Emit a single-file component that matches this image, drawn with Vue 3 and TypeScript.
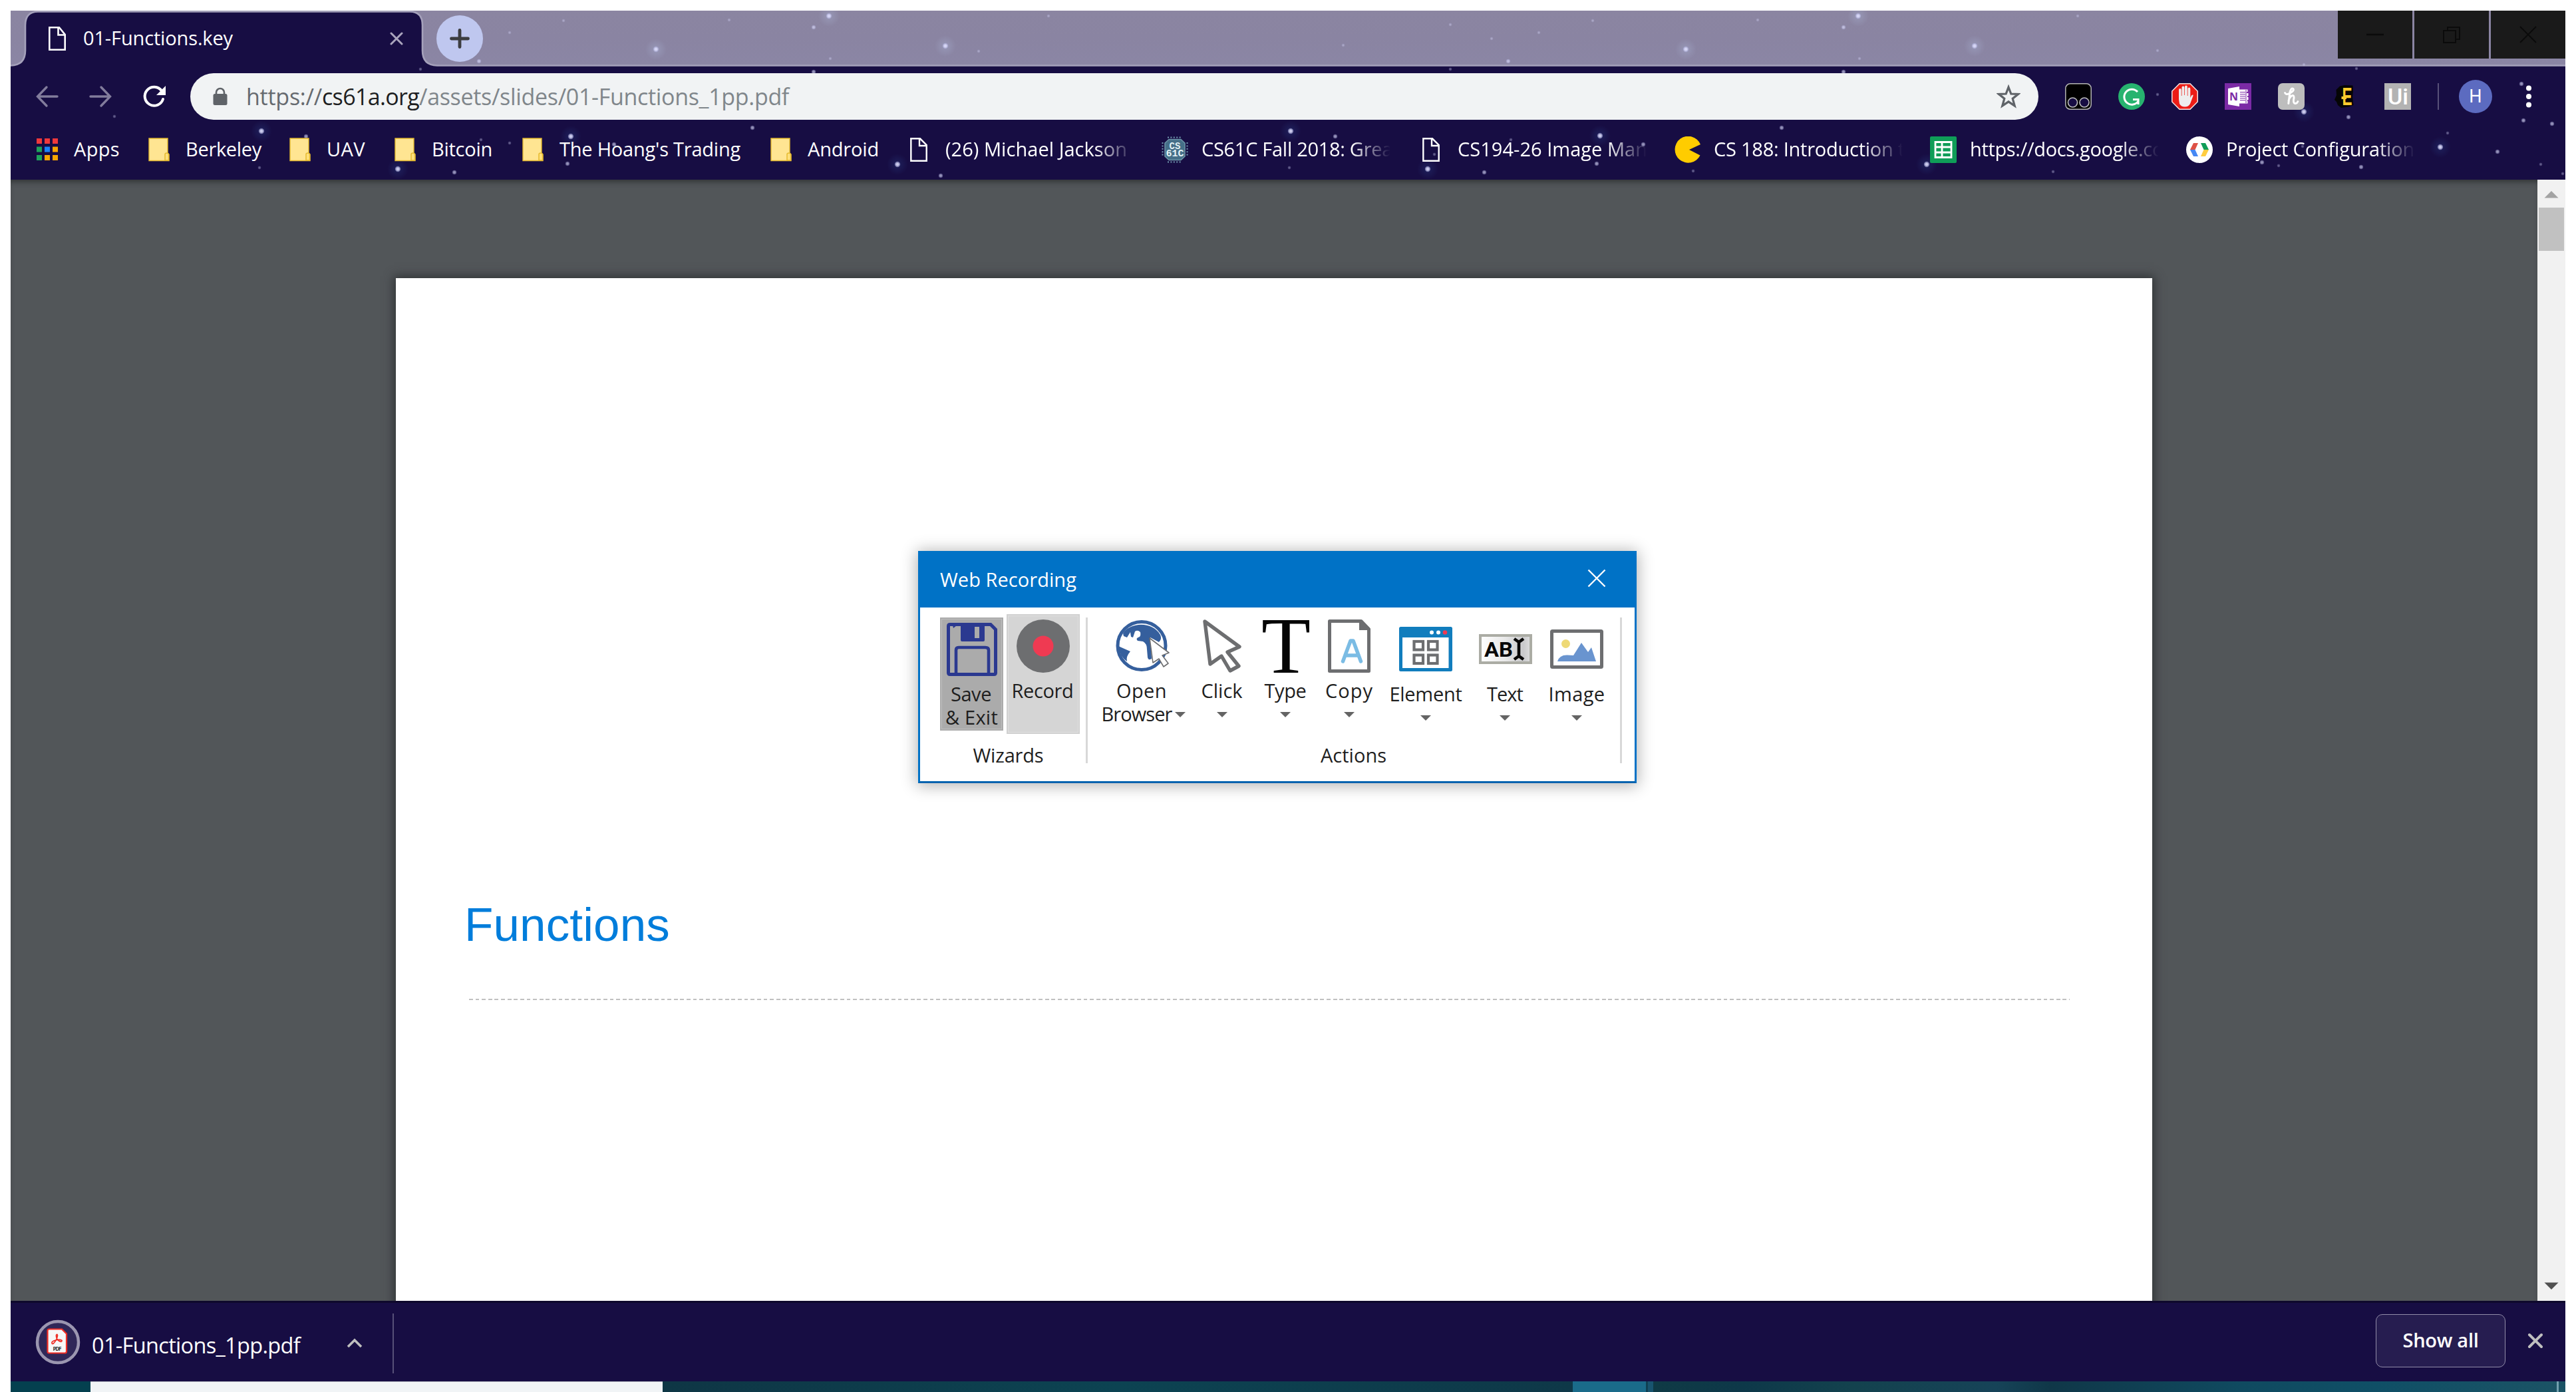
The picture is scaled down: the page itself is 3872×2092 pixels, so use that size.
<script setup lang="ts">
import type { Directive } from 'vue'

/* Spreads a label's letters so that it takes the given width in pixels. */
const vFit: Directive<HTMLElement, number> = {
  mounted(el, binding) {
    const natural = el.getBoundingClientRect().width
    const count = (el.textContent ?? '').length
    if (count) el.style.letterSpacing = `${(binding.value - natural) / count}px`
  },
}

interface Bookmark { icon: string; label: string; width: number; slot: number; fade?: boolean }
const bookmarks: Bookmark[] = [
  { icon: 'apps', label: 'Apps', width: 69, slot: 168 },
  { icon: 'folder', label: 'Berkeley', width: 114, slot: 212 },
  { icon: 'folder', label: 'UAV', width: 58, slot: 158 },
  { icon: 'folder', label: 'Bitcoin', width: 91, slot: 192 },
  { icon: 'folder', label: "The Hoang's Trading", width: 272, slot: 373 },
  { icon: 'folder', label: 'Android', width: 107, slot: 207 },
  { icon: 'file', label: '(26) Michael Jackson', width: 273, slot: 385, fade: true },
  { icon: 'chip', label: 'CS61C Fall 2018: Grea', width: 287, slot: 385, fade: true },
  { icon: 'file', label: 'CS194-26 Image Man', width: 285, slot: 385, fade: true },
  { icon: 'pac', label: 'CS 188: Introduction t', width: 287, slot: 385, fade: true },
  { icon: 'sheet', label: 'https://docs.google.co', width: 291, slot: 385, fade: true },
  { icon: 'dev', label: 'Project Configuration', width: 283, slot: 385, fade: true },
]

interface Action { id: string; lines: [string, number][]; slot: number; low?: boolean }
const actions: Action[] = [
  { id: 'globe', lines: [['Open', 76], ['Browser', 106]], slot: 140 },
  { id: 'cursor', lines: [['Click', 62]], slot: 101 },
  { id: 'type', lines: [['Type', 63]], slot: 90 },
  { id: 'copy', lines: [['Copy', 72]], slot: 102 },
  { id: 'element', lines: [['Element', 109]], slot: 128, low: true },
  { id: 'text', lines: [['Text', 54]], slot: 110, low: true },
  { id: 'image', lines: [['Image', 85]], slot: 106, low: true },
]

/* x, y, size: 1 faint, 2 medium, 3 bright with a glow */
const stars: [number, number, number][] = [
  [847, 31, 1], [766, 49, 1], [986, 74, 3], [720, 92, 2], [1096, 30, 1], [1246, 24, 3], [1223, 41, 2],
  [1421, 69, 3], [1576, 24, 1], [1471, 77, 1], [1248, 88, 1], [1223, 108, 2], [2180, 37, 1], [2394, 31, 1],
  [2313, 49, 1], [2534, 74, 3], [2267, 92, 2], [2642, 30, 1], [2793, 24, 3], [2771, 41, 2], [2968, 69, 3],
  [2795, 88, 1], [2242, 58, 1], [2019, 68, 1], [2771, 108, 2], [3123, 24, 1], [3243, 76, 1], [3463, 97, 1],
  [172, 175, 1], [632, 104, 1], [2180, 104, 1], [3542, 103, 1], [3243, 142, 1],
  [393, 197, 3], [460, 205, 2], [723, 210, 1], [858, 205, 3], [766, 215, 1], [923, 217, 2], [853, 246, 2],
  [598, 254, 3], [683, 259, 2], [390, 252, 1], [1131, 192, 2], [1349, 247, 3], [1414, 264, 2], [1940, 197, 3],
  [1938, 252, 1], [2007, 205, 2], [2271, 210, 1], [2405, 204, 3], [2470, 217, 2], [2400, 246, 2],
  [2146, 254, 3], [2231, 259, 2], [2156, 232, 1], [2678, 192, 2], [2896, 247, 3], [2545, 257, 1],
  [3790, 126, 2], [3463, 168, 3], [3530, 176, 2], [3793, 181, 2], [3836, 186, 2], [3679, 200, 1],
  [3668, 221, 3], [3754, 228, 2], [3400, 244, 2], [3425, 249, 1], [3549, 251, 2], [3086, 258, 1],
  [3819, 247, 1], [3461, 220, 1], [3852, 261, 1],
]
const starRadius = [0, 2.4, 3.2, 4.2]
const starOpacity = [0, 0.38, 0.65, 0.9]
</script>

<template>
  <div class="screen">
    <div class="window">
      <div class="chrome">
        <div class="strip">
          <svg class="tabshape" width="3840" height="84" viewBox="0 0 3840 84">
            <path d="M0 84V83Q22 82 22 60V22Q22 2 41 2H600Q619 2 619 22V60Q619 82 641 83H3840V84Z" fill="#170d43" />
            <path d="M0 82.5Q22 82 22 60V22Q22 1.5 41 1.5H600Q619 1.5 619 22V60Q619 82 641 82.5H3840" fill="none" stroke="#a5a1bb" stroke-width="2.6" />
          </svg>
          <div class="tab">
            <svg width="26" height="36" viewBox="0 0 26 36" fill="none" stroke="#fff" stroke-width="2.6"><path d="M1.3 1.3H16L24.7 12V34.7H1.3ZM14.500 1.300V12.500H24.700" /></svg>
            <span class="tabtitle"><span v-fit="225">01-Functions.key</span></span>
            <svg class="tabclose" width="20" height="20" viewBox="0 0 20 20" stroke="#aaa5bd" stroke-width="3" stroke-linecap="round"><path d="M2 2 18 18M18 2 2 18" /></svg>
          </div>
          <div class="newtab"><svg width="30" height="30" viewBox="0 0 30 30" stroke="#3c3d40" stroke-width="4.800" stroke-linecap="round"><path d="M15 2.500V27.500M2.500 15H27.500" /></svg></div>
          <div class="winbtns">
            <div><svg width="28" height="28" viewBox="0 0 28 28" stroke="#0b0b0b" stroke-width="2.5"><path d="M1 14H27" /></svg></div>
            <div><svg width="28" height="28" viewBox="0 0 28 28" fill="none" stroke="#0b0b0b" stroke-width="2"><path d="M2 8H20V26H2ZM8 8V3H26V21H20" /></svg></div>
            <div><svg width="28" height="28" viewBox="0 0 28 28" stroke="#0b0b0b" stroke-width="2"><path d="M2 2 26 26M26 2 2 26" /></svg></div>
          </div>
        </div>

        <svg class="stars" width="3840" height="254" viewBox="16 16 3840 254">
          <defs>
            <radialGradient id="glow"><stop offset="0" stop-color="#3a6fc0" stop-opacity=".2" /><stop offset="1" stop-color="#3a6fc0" stop-opacity="0" /></radialGradient>
            <radialGradient id="paleglow"><stop offset="0" stop-color="#b4c4e6" stop-opacity=".3" /><stop offset="1" stop-color="#b4c4e6" stop-opacity="0" /></radialGradient>
            <radialGradient id="spark"><stop offset="0.4" stop-color="#dcdcfb" /><stop offset="1" stop-color="#b4b4e4" stop-opacity=".5" /></radialGradient>
          </defs>
          <g v-for="(s, i) in stars" :key="i">
            <circle v-if="s[2] === 3" :cx="s[0]" :cy="s[1]" r="16" :fill="s[1] < 100 ? 'url(#paleglow)' : 'url(#glow)'" />
            <circle :cx="s[0]" :cy="s[1]" :r="starRadius[s[2]]" fill="url(#spark)" :opacity="starOpacity[s[2]]" />
          </g>
        </svg>

        <div class="toolbar">
          <svg class="nav" width="34" height="34" viewBox="0 0 34 34" fill="none" stroke="#827c9c" stroke-width="3.4" stroke-linecap="round"><path d="M32 17H3M16 3 2.500 17 16 31" /></svg>
          <svg class="nav fwd" width="34" height="34" viewBox="0 0 34 34" fill="none" stroke="#827c9c" stroke-width="3.4" stroke-linecap="round"><path d="M2 17H31M18 3 31.500 17 18 31" /></svg>
          <svg class="nav reload" width="36" height="36" viewBox="0 0 36 36"><path d="M29 9.500A14 14 0 1 0 31 22" fill="none" stroke="#fff" stroke-width="4" stroke-linecap="round" /><path d="M35 2V16H21Z" fill="#fff" /></svg>
          <div class="omnibox">
            <svg width="22" height="28" viewBox="0 0 22 28"><path d="M5 12V8A6 6 0 0 1 17 8V12" fill="none" stroke="#5f6368" stroke-width="2.600" /><rect x=".5" y="10" width="21" height="17" rx="2.500" fill="#5f6368" /></svg>
            <span class="url"><span v-fit="114" class="scheme">https://</span><span v-fit="146" class="host">cs61a.org</span><span v-fit="556" class="path">/assets/slides/01-Functions_1pp.pdf</span></span>
            <svg class="star" width="36" height="36" viewBox="0 0 36 36"><path d="M18 4 21.800 14 32.500 14.500 24.200 21.200 27.200 32 18 25.800 8.800 32 11.800 21.200 3.500 14.500 14.200 14Z" fill="none" stroke="#5f6368" stroke-width="3.200" /></svg>
          </div>
          <div class="extensions">
            <svg width="40" height="40" viewBox="0 0 40 40"><rect x=".8" y=".8" width="38.400" height="38.400" rx="7" fill="#000" stroke="#b5b5b5" stroke-width="1.500" /><g fill="#170d43" stroke="#bdbdbd" stroke-width="1.600"><circle cx="11.500" cy="29" r="7" /><circle cx="29" cy="29" r="7" /></g></svg>
            <svg width="40" height="40" viewBox="0 0 40 40"><circle cx="20" cy="20" r="20" fill="#27b36f" /><path d="M29 13A11.500 11.500 0 1 0 30 27M22 24.500H30V32" fill="none" stroke="#fff" stroke-width="3" /></svg>
            <svg width="40" height="40" viewBox="0 0 40 40"><path d="M12 .8H28L39.200 12V28L28 39.200H12L.8 28V12Z" fill="#ec1c16" stroke="#f3e5e5" stroke-width="1.500" /><path d="M11 24V10a1.900 1.900 0 0 1 3.800 0V19H15.500V6.500a1.900 1.900 0 0 1 3.800 0V18H20V5.500a1.900 1.900 0 0 1 3.800 0V19H24.500V8.500a1.900 1.900 0 0 1 3.800 0V22L30 18.500q3-2 2.500.5L28 31q-2.500 4.500-8 4.500T12 31Z" fill="#eee" /></svg>
            <svg width="40" height="40" viewBox="0 0 40 40"><rect width="40" height="40" fill="#7b2aa5" /><path d="M22 9.500H34.500V13H33V15H35.500V19H34V21H35.500V25H34V27H34.500V30.500H22Z" fill="#fff" /><path d="M23 13.500H31M23 16.500H31M23 19.500H31M23 22.500H31M23 25.500H31M32 10V30" stroke="#7b2aa5" stroke-width="1" /><path d="M5 8 22 5V35L5 32Z" fill="#fff" /><text x="13.500" y="26" text-anchor="middle" font-family="Open Sans, sans-serif" font-size="16" font-weight="700" fill="#7b2aa5">N</text></svg>
            <svg width="40" height="40" viewBox="0 0 40 40"><rect width="40" height="40" rx="7" fill="#bdbdbd" /><path d="M10.500 14.500Q12 18 17 15.500Q25 11.500 23 8.500Q20 6.500 18 13L15.800 30.500M16 26Q19 18 22.500 18.500Q25 19 23.500 25Q23 31 26.500 30.500Q29 30 30 27.500" fill="none" stroke="#fff" stroke-width="2.900" stroke-linecap="round" stroke-linejoin="round" /></svg>
            <svg width="40" height="40" viewBox="0 0 40 40"><path d="M13 4.500 20 3 32.500 3.500 33 12 32 21 33.500 33 26 35.500 15 37 10 33 8 28 5 25 8 18 7.500 10Z" fill="#050505" /><text x="24" y="32.500" text-anchor="middle" font-family="Liberation Sans, sans-serif" font-size="36" font-weight="700" fill="#fccb2d" textLength="15" lengthAdjust="spacingAndGlyphs">E</text><path d="M15.500 22H23" stroke="#fccb2d" stroke-width="4" /></svg>
            <svg width="40" height="40" viewBox="0 0 40 40"><rect width="40" height="40" fill="#b3b3b3" /><text x="20.500" y="32" text-anchor="middle" font-family="Roboto, sans-serif" font-size="33" font-weight="500" fill="#fff" textLength="31" lengthAdjust="spacingAndGlyphs">Ui</text></svg>
          </div>
          <div class="rule"></div>
          <div class="avatar">H</div>
          <svg class="menu" width="10" height="36" viewBox="0 0 10 36" fill="#fff"><circle cx="5" cy="5.500" r="4" /><circle cx="5" cy="18" r="4" /><circle cx="5" cy="30.500" r="4" /></svg>
        </div>

        <div class="bookmarks">
          <div v-for="b in bookmarks" :key="b.label" class="bm" :style="{ width: b.slot + 'px' }">
            <svg width="40" height="40" viewBox="0 0 40 40">
              <g v-if="b.icon === 'apps'">
                <path d="M4 3h8v8H4zM16 3h8v8h-8zM28 3h8v8h-8z" fill="#f0383b" />
                <path d="M4 15.500h8v8H4zM4 28h8v8H4z" fill="#1fa35b" />
                <path d="M16 15.500h8v8h-8z" fill="#1a82fb" />
                <path d="M28 15.500h8v8h-8zM16 28h8v8h-8zM28 28h8v8h-8z" fill="#f7a500" />
              </g>
              <g v-else-if="b.icon === 'folder'"><path d="M5 3H33V25L35 27V36.500H5Z" fill="#ffe592" stroke="#e6bb31" stroke-width="1.400" /><path d="M29 36V27q0-2 2.500-2T34.500 27V36Z" fill="#ffe07d" stroke="#e6bb31" stroke-width="1.500" /></g>
              <path v-else-if="b.icon === 'file'" d="M8.300 3.300H22L31.700 13V36.700H8.300ZM21 3.300V14H31.700" fill="none" stroke="#fff" stroke-width="2.400" />
              <g v-else-if="b.icon === 'chip'">
                <path d="M9 1.500H31M9 38.500H31" stroke="#7399b0" stroke-width="2" stroke-dasharray="2 2.400" />
                <path d="M1.500 9V31M38.500 9V31" stroke="#7399b0" stroke-width="2" stroke-dasharray="2 2.400" />
                <path d="M11 4.500H29L35 10V30L29 35.500H11L5 30V10Z" fill="#456f88" stroke="#6d95a8" stroke-width="1.500" />
                <g font-family="Liberation Mono, monospace" font-weight="700" fill="#e2f1f5" text-anchor="middle"><text x="20" y="18.500" font-size="14">CS</text><text x="20" y="30" font-size="15">61C</text></g>
              </g>
              <path v-else-if="b.icon === 'pac'" d="M40 12A20 20 0 1 0 39.500 28.500L23 20Z" fill="#ffcc00" />
              <g v-else-if="b.icon === 'sheet'"><rect width="40" height="40" rx="2" fill="#0f9d58" /><path d="M8 8.500H32V31.500H8ZM8 16H32M8 24H32M18 8.500V31.500" fill="none" stroke="#fff" stroke-width="2.800" /></g>
              <g v-else><circle cx="20" cy="20" r="20" fill="#fff" /><path d="M11 10H18L13.500 20H6Z" fill="#de5145" /><path d="M6 20H13.500L18 30H11Z" fill="#4688f4" /><path d="M22 10H29L34 20H26.500Z" fill="#109d58" /><path d="M26.500 20H34L29 30H22Z" fill="#ffcd40" /></g>
            </svg>
            <span class="bmtext" :class="{ fade: b.fade }"><span v-fit="b.width">{{ b.label }}</span></span>
          </div>
        </div>
      </div>

      <div class="content">
        <div class="viewer">
          <div class="page">
            <h1><span v-fit="309">Functions</span></h1>
            <div class="dashes"></div>
          </div>
        </div>
        <div class="scrollbar">
          <svg width="42" height="42" viewBox="0 0 42 42"><path d="M21 17 31.500 27.500H10.500Z" fill="#a3a3a3" /></svg>
          <div class="thumb"></div>
          <svg class="down" width="42" height="42" viewBox="0 0 42 42"><path d="M21 25 31.500 14.500H10.500Z" fill="#505050" /></svg>
        </div>
      </div>

      <div class="downloads">
        <svg class="dlicon" width="68" height="68" viewBox="0 0 68 68">
          <circle cx="34" cy="34" r="31" fill="#2f2758" stroke="#9b96b0" stroke-width="4.500" />
          <path d="M21 14.500H40L47 21.500V48Q47 50.500 44.500 50.500H20.500Q18.500 50.500 18.500 48V17Q18.500 14.500 21 14.500Z" fill="#f7f7f7" stroke="#ef2d24" stroke-width="2.200" />
          <path d="M25 35.500Q24 33 31 31Q37 29.500 40 31.500Q40.500 34.500 36 32.500Q31 29 31.500 23.500Q33 21 33.500 24Q33 30 27.500 36Q25.500 37.500 25 35.500Z" fill="none" stroke="#ef2d24" stroke-width="1.700" />
          <text x="33" y="47" text-anchor="middle" font-family="Open Sans, sans-serif" font-size="8" font-weight="700" fill="#333" textLength="13">PDF</text>
        </svg>
        <span class="dltext"><span v-fit="313">01-Functions_1pp.pdf</span></span>
        <svg class="chev" width="24" height="16" viewBox="0 0 24 16"><path d="M2 14 12 4 22 14" fill="none" stroke="#bfbfbf" stroke-width="3.600" /></svg>
        <div class="dlrule"></div>
        <button class="showall"><span v-fit="114">Show all</span></button>
        <svg class="dlclose" width="24" height="24" viewBox="0 0 24 24" stroke="#bfbfbf" stroke-width="4" stroke-linecap="round"><path d="M3 3 21 21M21 3 3 21" /></svg>
      </div>

      <div class="taskbar">
        <div class="search"></div>
        <div class="mid"></div>
        <div class="active"></div>
        <div class="active2"></div>
        <div class="rest"></div>
        <div class="peek"></div>
        <div class="corner"></div>
      </div>
    </div>

    <div class="dialog">
      <div class="title">
        <span v-fit="205" class="caption">Web Recording</span>
        <svg width="28" height="28" viewBox="0 0 28 28" stroke="#fff" stroke-width="2.400"><path d="M1.500 1.500 26.500 26.500M26.500 1.500 1.500 26.500" /></svg>
      </div>
      <div class="groups">
        <div class="wizards">
          <div class="wizrow">
            <div class="wiz save">
              <svg width="76" height="80" viewBox="0 0 76 80">
                <path d="M2.500 5Q2.500 2.500 5 2.500H66L73.500 10V75Q73.500 77.500 71 77.500H5Q2.500 77.500 2.500 75Z" fill="none" stroke="#2b3990" stroke-width="5" />
                <path d="M21 3H57V26Q57 28 55 28H23Q21 28 21 26Z" fill="#2b3990" /><rect x="42" y="6" width="7" height="17" fill="#ababab" /><path d="M9 4H15L10 8Z" fill="#2b3990" />
                <path d="M14 77V41Q14 37 18 37H58Q63 37 63 41V77" fill="none" stroke="#2b3990" stroke-width="4.600" />
              </svg>
              <span class="lbl nudge"><span v-fit="61">Save</span></span>
              <span class="lbl"><span v-fit="79">&amp; Exit</span></span>
            </div>
            <div class="wiz record">
              <svg width="80" height="80" viewBox="0 0 80 80"><circle cx="40" cy="40" r="40" fill="#6d6e70" /><circle cx="40" cy="40" r="15.500" fill="#ef3a52" /></svg>
              <span class="lbl nudge"><span v-fit="93">Record</span></span>
            </div>
          </div>
          <div class="gname"><span v-fit="106">Wizards</span></div>
        </div>
        <div class="sep"></div>
        <div class="actions">
          <div class="actrow">
            <div v-for="a in actions" :key="a.id" class="act" :class="{ low: a.low }" :style="{ width: a.slot + 'px' }">
              <svg width="84" height="80" viewBox="-2 0 84 80">
                <g v-if="a.id === 'globe'">
                  <circle cx="40" cy="39.500" r="36" fill="#fff" stroke="#355f9d" stroke-width="5" />
                  <path d="M12 21C22 4 56 2 68 23C70 28 69 31 66 34L53 27 55 59Q50 62 49 57L48 45Q48 36 42 33L34 32Q30 28 37 26Q39 24 38 19Q34 15 30 18L27 27 24 26 23 19 18 27 13 25Z" fill="#355f9d" />
                  <path d="M5 40 23 48Q16 56 18 63Q7 56 5 40Z" fill="#355f9d" />
                  <path d="M52 28 81 50 71 54 80 66 73 71 66 59 57 65Z" fill="#fff" stroke="#6d6e70" stroke-width="1.600" stroke-linejoin="round" />
                </g>
                <path v-else-if="a.id === 'cursor'" d="M14 3 66 41 48 49 65 70 52 77 39 55 22 67Z" fill="#fff" stroke="#6d6e70" stroke-width="5.400" stroke-linejoin="round" />
                <text v-else-if="a.id === 'type'" x="41" y="80" text-anchor="middle" font-family="Liberation Serif, serif" font-size="121" fill="#050505" textLength="74" lengthAdjust="spacingAndGlyphs">T</text>
                <g v-else-if="a.id === 'copy'">
                  <path d="M10.500 2.500H58L69.500 14.500V77.500H10.500Z" fill="#fff" stroke="#6d6e70" stroke-width="5" stroke-linejoin="round" /><path d="M55 1H59L71 13V16H55Z" fill="#6d6e70" />
                  <path d="M30.500 63 42 32H46L57.500 63M34 54H54" fill="none" stroke="#7bbce4" stroke-width="5.500" stroke-linecap="round" stroke-linejoin="round" />
                </g>
                <g v-else-if="a.id === 'element'">
                  <rect x="0" y="6" width="80" height="67" rx="2.500" fill="#117dbd" /><rect x="5" y="22" width="69.500" height="46" fill="#fff" />
                  <circle cx="49" cy="14.500" r="3" fill="#fff" /><circle cx="59" cy="14.500" r="3" fill="#fff" /><circle cx="69" cy="14.500" r="3.300" fill="#ef3a52" />
                  <g fill="none" stroke="#6d6e70" stroke-width="4.200"><rect x="22.500" y="28" width="13.500" height="12.500" /><rect x="44" y="28" width="13.500" height="12.500" /><rect x="22.500" y="48.500" width="13.500" height="12.500" /><rect x="44" y="48.500" width="13.500" height="12.500" /></g>
                </g>
                <g v-else-if="a.id === 'text'">
                  <defs><linearGradient id="field"><stop offset="0" stop-color="#fff" /><stop offset=".5" stop-color="#e8e8e8" /><stop offset=".85" stop-color="#c9c9cb" /><stop offset="1" stop-color="#dedede" /></linearGradient></defs>
                  <rect x="3" y="19" width="76" height="41" fill="url(#field)" stroke="#abaca4" stroke-width="4" />
                  <text x="9" y="51" font-family="Roboto, sans-serif" font-size="31" font-weight="700" fill="#080808" textLength="43" lengthAdjust="spacingAndGlyphs">AB</text>
                  <path d="M54 24 61 29 68 24M54 55 61 50 68 55M61 29V50" fill="none" stroke="#080808" stroke-width="4.600" />
                </g>
                <g v-else>
                  <rect x="2.500" y="12.500" width="75" height="54" rx="1" fill="#fff" stroke="#6d6e70" stroke-width="5" />
                  <circle cx="23.500" cy="31.500" r="6.500" fill="#eed976" /><path d="M11 58Q14 48 26 48.500L35 49 47 30 57 44 62 37 69 58Z" fill="#6994cf" />
                </g>
              </svg>
              <span class="lbl"><span v-fit="a.lines[0][1]">{{ a.lines[0][0] }}</span></span>
              <span class="lbl second"><span v-if="a.lines[1]" v-fit="a.lines[1][1]">{{ a.lines[1][0] }}</span><svg width="16" height="8" viewBox="0 0 16 8"><path d="M0 0H16L8 8Z" fill="#646464" /></svg></span>
            </div>
          </div>
          <div class="gname"><span v-fit="99">Actions</span></div>
        </div>
        <div class="sep"></div>
      </div>
    </div>
  </div>
</template>

<style>
body { margin: 0; background: #fff; }
</style>

<style scoped>
.screen { position: relative; width: 3872px; height: 2092px; box-sizing: border-box; padding: 16px 16px 0; background: #fff; overflow: hidden; font: 29px/40px "Open Sans", "Noto Sans", sans-serif; color: #fff; }
.screen * { box-sizing: border-box; }
svg { display: block; flex: none; }
span { white-space: pre; }
.window { display: flex; flex-direction: column; width: 3840px; height: 2076px; }

.chrome { position: relative; height: 254px; background: #170d43; }
.strip { position: relative; display: flex; height: 84px; background: linear-gradient(#8b85a1, #8a84a2 50%, #8b86a5); }
.tabshape { position: absolute; left: 0; top: 0; }
.tab { position: relative; display: flex; align-items: center; width: 618px; height: 84px; padding-left: 57px; }
.tabtitle { margin: -2px 0 0 26px; flex: 1; }
.tabclose { margin-right: 28px; }
.newtab { display: flex; align-items: center; justify-content: center; width: 70px; height: 70px; margin: 7px 0 0 22px; border-radius: 50%; background: #bfc7ef; }
.winbtns { position: relative; display: flex; gap: 3px; margin-left: auto; }
.winbtns div { display: flex; align-items: center; justify-content: center; width: 112px; height: 72px; background: #1a1a1a; }
.stars { position: absolute; left: 0; top: 0; }

.toolbar { position: relative; display: flex; align-items: center; height: 90px; padding-left: 38px; }
.fwd { margin-left: 46px; }
.reload { margin-left: 46px; }
.omnibox { display: flex; align-items: center; width: 2778px; height: 70px; margin-left: 36px; padding: 0 27px 0 34px; border-radius: 35px; background: #f1f3f4; }
.url { display: flex; margin-left: 28px; font-size: 34px; line-height: 46px; }
.scheme { color: #666a6f; }
.host { color: #1d1e21; }
.path { color: #80868b; }
.star { margin-left: auto; }
.extensions { display: flex; gap: 40px; margin-left: 40px; }
.rule { width: 2px; height: 40px; margin-left: 40px; background: #575078; }
.avatar { width: 50px; height: 50px; margin-left: 30px; border-radius: 50%; background: #5c6bc0; font: 27px/50px Roboto, sans-serif; text-align: center; }
.menu { margin-left: 50px; }

.bookmarks { position: relative; display: flex; align-items: center; height: 70px; padding-left: 35px; }
.bm { display: flex; flex: none; align-items: center; }
.bmtext { margin: -3px 0 0 20px; }
.fade { width: 289px; overflow: hidden; mask-image: linear-gradient(90deg, #000 225px, transparent 284px); }

.content { display: flex; height: 1685px; background: #525659; }
.viewer { flex: 1; height: 1685px; padding: 148px 0 0 579px; overflow: hidden; box-shadow: inset 0 7px 8px -4px #303335; }
.page { width: 2640px; height: 1560px; padding: 932px 0 0 103px; background: #fff; box-shadow: 0 0 14px 3px #303335; }
h1 { margin: 0; font: 71px/80px "Liberation Sans", sans-serif; color: #007ddb; }
.dashes { width: 2406px; height: 2px; margin: 71px 0 0 7px; background: repeating-linear-gradient(90deg, #c0c0c0 0 5.800px, #fff 5.800px 9.620px); }
.scrollbar { display: flex; flex-direction: column; width: 42px; background: #f1f1f1; }
.thumb { width: 38px; height: 65px; margin-left: 2px; background: #c1c1c1; }
.down { margin-top: auto; }

.downloads { display: flex; align-items: center; height: 121px; padding: 3px 0 0 37px; border-top: 3px solid #0e082c; background: #170d43; }
.dlicon { margin-bottom: 4px; }
.dltext { margin: 7px 0 0 17px; font-size: 32.500px; }
.chev { margin: 0 0 2px 70px; }
.dlrule { width: 2px; height: 90px; margin-left: 45px; background: #575078; }
.showall { width: 195px; height: 80px; margin: 0 0 7px auto; padding: 0 0 3px; border: 1px solid #918ca8; border-radius: 10px; background: #261d50; color: #fff; font: 600 29px/40px "Open Sans", sans-serif; }
.dlclose { margin: 0 33px 7px; }

.taskbar { display: flex; height: 16px; background: #04404f; }
.search { width: 860px; height: 16px; margin-left: 120px; border-top: 1px solid #b9bcc4; background: #f1f4f6; }
.mid { width: 1368px; background: linear-gradient(90deg, #0e3645, #0c4352 50%, #0e3848); }
.active { width: 110px; background: #1a6b8a; }
.active2 { width: 11px; border-left: 3px solid #104052; background: #18546f; }
.rest { width: 1358px; background: linear-gradient(90deg, #0f3a45, #0d3849 10%, #13424e 22%, #164358 38%, #0f3748 44%, #0f4a60 65%, #0f4f66 80%, #1b5365); }
.peek { width: 3px; background: #72a0ae; }
.corner { flex: 1; background: #1b5365; }

.dialog { position: absolute; left: 1380px; top: 828px; width: 1080px; height: 349px; border: 3px solid #0072c6; border-top-width: 0; border-bottom-color: #0062ae; background: #fff; box-shadow: 0 2px 22px 2px rgba(0, 0, 0, .3); color: #1e1e1e; }
.title { display: flex; align-items: center; justify-content: space-between; height: 85px; padding: 0 43px 3px 30px; background: #0072c6; color: #fff; }
.caption { padding-top: 3px; }
.groups { display: flex; padding-left: 30px; }
.wizards { width: 219px; }
.wizrow { display: flex; height: 190px; }
.wiz { display: flex; flex-direction: column; align-items: center; }
.save { width: 95px; height: 170px; margin-top: 15px; padding-top: 8px; background: #ababab; box-shadow: inset 0 0 0 2px #ababab, inset 0 0 0 3px #bdbdbd; }
.record { width: 110px; height: 180px; margin: 10px 0 0 5px; padding-top: 8px; background: #d5d5d5; box-shadow: inset 0 0 0 2px #d0d0d0, inset 0 0 0 3px #e0e0e0; }
.lbl { display: flex; height: 35px; line-height: 35px; }
.wiz .lbl:nth-child(2) { margin-top: 9px; }
.nudge { padding-right: 2px; }
.gname { height: 40px; margin-top: 12px; text-align: center; }
.wizards .gname { padding-right: 14px; }
.sep { width: 3px; height: 219px; margin-top: 15px; background: #d8d8d8; }
.actions { width: 800px; }
.actrow { display: flex; height: 190px; padding-left: 11px; }
.act { display: flex; flex-direction: column; align-items: center; padding-top: 18px; }
.low { padding-top: 23px; }
.act .lbl:nth-child(2) { margin-top: 9px; }
.second svg { margin: 15px 0 0; }
.second span { margin-left: 5px; }
.second span + svg { margin-left: 4px; }
.actions .gname { padding-right: 1px; }
</style>
